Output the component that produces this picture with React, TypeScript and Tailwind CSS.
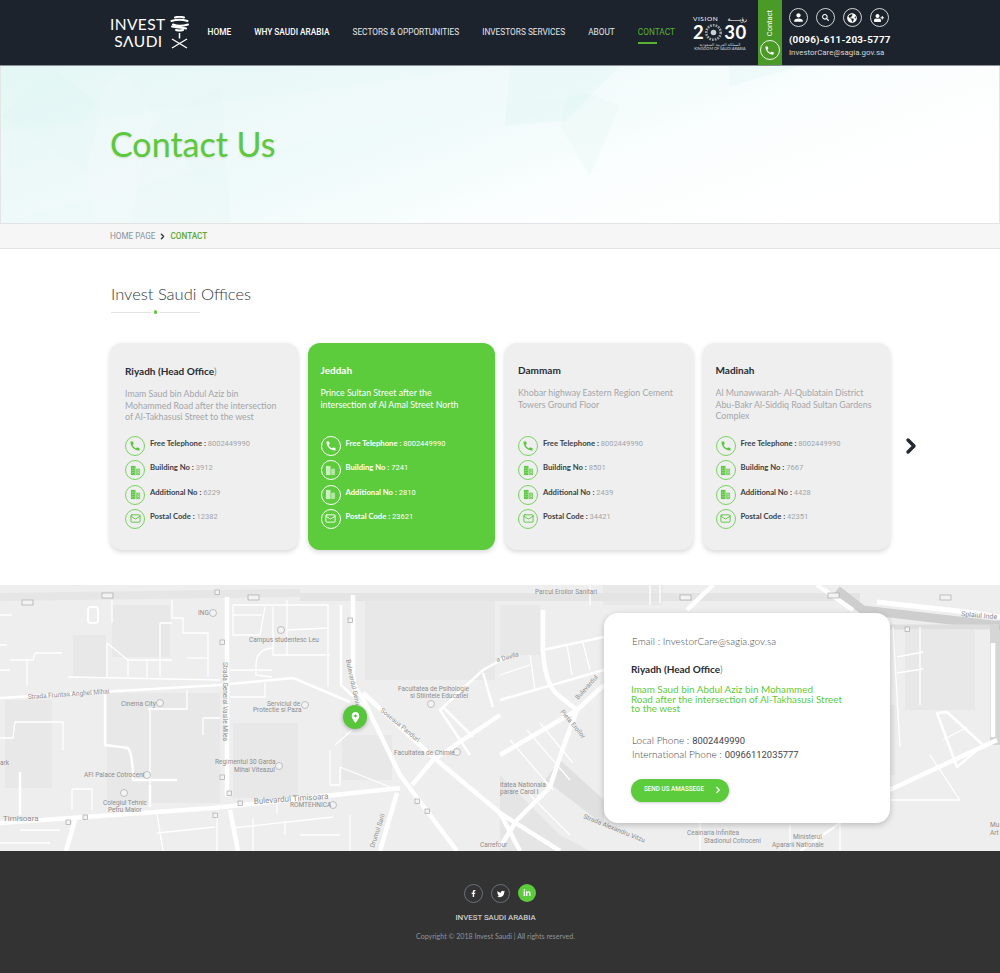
import { ChevronRight, Mail } from "lucide-react";
import { FaFacebookF, FaGlobeAmericas, FaLinkedinIn, FaSearch, FaTwitter, FaUserPlus } from "react-icons/fa";
import { MdCall, MdPerson, MdPlace } from "react-icons/md";

const NAV_ITEMS = ["HOME", "WHY SAUDI ARABIA", "SECTORS & OPPORTUNITIES", "INVESTORS SERVICES", "ABOUT"];

const OFFICES = [
  {
    name: "Riyadh (Head Office",
    close: ")",
    text: "Imam Saud bin Abdul Aziz bin Mohammed Road after the intersection of Al-Takhasusi Street to the west",
    phone: "8002449990",
    building: "3912",
    additional: "6229",
    postal: "12382",
  },
  {
    name: "Jeddah",
    text: "Prince Sultan Street after the intersection of Al Amal Street North",
    phone: "8002449990",
    building: "7241",
    additional: "2810",
    postal: "23621",
    active: true,
  },
  {
    name: "Dammam",
    text: "Khobar highway Eastern Region Cement Towers Ground Floor",
    phone: "8002449990",
    building: "8501",
    additional: "2439",
    postal: "34421",
  },
  {
    name: "Madinah",
    text: "Al Munawwarah- Al-Qublatain District Abu-Bakr Al-Siddiq Road Sultan Gardens Complex",
    phone: "8002449990",
    building: "7667",
    additional: "4428",
    postal: "42351",
  },
];

function BuildingIcon({ className }: { className: string }) {
  return (
    <svg viewBox="0 0 12 12" className={className} fill="currentColor">
      <path d="M1 1h5v10H1z" opacity="0.95" />
      <path d="M6.6 4H11v7H6.6z" opacity="0.7" />
      <path d="M2 3h1v1H2zM4 3h1v1H4zM2 5.5h1v1H2zM4 5.5h1v1H4zM2 8h1v1H2zM4 8h1v1H4zM8 6h2v.8H8zM8 8h2v.8H8z" fill="#eee" opacity="0.6" />
    </svg>
  );
}

function Logo() {
  return (
    <div className="flex items-center gap-[4px] text-white">
      <div className="flex flex-col items-end font-['Lato',sans-serif] text-[15.5px] font-normal leading-[17px] tracking-[0.4px]">
        <span>INVEST</span>
        <span className="mr-[3px]">SΛUDI</span>
      </div>
      <svg viewBox="0 0 19 33" className="h-[33px] w-[19px]" fill="none" stroke="currentColor">
        <path d="M5 1.5c3-1 6-1 9 0M1.5 5c5-1.500 11-1.500 16 0M3 8.500c4 1.500 10 1.500 15 0M2 10.500c5 1 10 1 14 2M6 14c2 .6 5 .6 7 0" strokeWidth="2" strokeLinecap="round" />
        <path d="M9.500 17v5.500" strokeWidth="1.500" />
        <path d="M2 23l15 9M17 23L2 32" strokeWidth="1.300" />
      </svg>
    </div>
  );
}

function VisionLogo() {
  return (
    <div className="flex w-[54px] flex-col text-white">
      <div className="flex items-center justify-between font-['Lato',sans-serif] text-[6.5px] leading-[8px] tracking-[0.6px]">
        <span>VISION</span>
        <span className="font-['DejaVu_Sans',sans-serif] text-[6px] tracking-normal">رؤيـــــة</span>
      </div>
      <div className="mt-[1px] flex items-center justify-between font-['Lato',sans-serif] text-[18.5px] font-bold leading-[16px]">
        <span>2</span>
        <svg viewBox="0 0 16 16" className="h-[17px] w-[17px]">
          <circle cx="8" cy="8" r="6.800" fill="none" stroke="#9aa0a5" strokeWidth="2.400" strokeDasharray="1.600 1" />
          <circle cx="8" cy="8" r="2.600" fill="#ccd0d2" />
        </svg>
        <span className="tracking-[0.6px]">30</span>
      </div>
      <span className="mt-[1px] text-center font-['DejaVu_Sans',sans-serif] text-[4px] leading-[5px] text-gray-300">المملكة العربية السعودية</span>
      <span className="text-center font-['Lato',sans-serif] text-[3.8px] leading-[4px] text-gray-300">KINGDOM OF SAUDI ARABIA</span>
    </div>
  );
}

function Header() {
  const circle = "flex h-[19px] w-[19px] items-center justify-center rounded-full border border-white/80 text-white";
  return (
    <header className="flex h-[66px] items-center border-b border-[#8a9094] bg-[#1c232c] pl-[110px] font-['Roboto',sans-serif]">
      <Logo />
      <nav className="ml-[19px] flex gap-[23px] text-[8.3px] leading-none text-[#e5e7e8]">
        {NAV_ITEMS.map((item, i) => (
          <a key={item} className={i < 2 ? "font-medium text-white" : ""}>
            {item}
          </a>
        ))}
      </nav>
      <div className="relative ml-[23px] text-[8.3px] leading-none text-[#58b332]">
        <a>CONTACT</a>
        <div className="absolute left-0 top-[14px] h-[2px] w-[19px] bg-[#58b332]" />
      </div>
      <div className="ml-[18px]">
        <VisionLogo />
      </div>
      <div className="ml-[11px] flex h-[65px] w-[24px] flex-col items-center justify-between bg-[#4a9a27] pb-[5px] pt-[10px]">
        <span className="rotate-180 text-[7.5px] leading-none text-white [writing-mode:vertical-rl]">Contact</span>
        <span className="flex h-[20px] w-[20px] items-center justify-center rounded-full border border-white/90 text-white">
          <MdCall size={11} />
        </span>
      </div>
      <div className="ml-[7px] flex h-[65px] flex-col pt-[8px]">
        <div className="flex gap-[8px]">
          <span className={circle}><MdPerson size={13} /></span>
          <span className={circle}><FaSearch size={7} /></span>
          <span className={circle}><FaGlobeAmericas size={10} /></span>
          <span className={circle}><FaUserPlus size={10} /></span>
        </div>
        <div className="mt-[6px] text-[9.9px] font-bold leading-[13px] tracking-[0.2px] text-white">(0096)-611-203-5777</div>
        <div className="mt-[1px] text-[7.9px] leading-[11px] text-[#d5d8da]">InvestorCare@sagia.gov.sa</div>
      </div>
    </header>
  );
}

function Hero() {
  return (
    <section className="relative h-[157px] border-x border-[#e5e5e5] bg-[linear-gradient(160deg,#e4f7f5_0%,#effafa_40%,#fbfefe_65%,#ffffff_85%)] pl-[109px]">
      <svg viewBox="0 0 1000 157" className="absolute inset-0 h-full w-full" preserveAspectRatio="none">
        <path d="M50 0L100 40 85 105 0 50Z" fill="#d6f2ef" opacity="0.15" />
        <path d="M120 0L225 157 95 157 80 60Z" fill="#ffffff" opacity="0.12" />
        <path d="M510 0H620L565 55 505 60Z" fill="#d4f3ef" opacity="0.25" />
        <path d="M570 20L620 40 590 110 560 60Z" fill="#d8f3f0" opacity="0.18" />
        <path d="M220 20L230 157 130 157 150 60Z" fill="#dff5f2" opacity="0.2" />
        <path d="M0 65L500 0 800 0 360 60 0 157Z" fill="#ffffff" opacity="0.12" />
        <path d="M730 0L800 0 730 20Z" fill="#d8f3ef" opacity="0.25" />
      </svg>
      <h1 className="relative pt-[57px] font-['Lato',sans-serif] text-[34px] font-normal leading-[42px] text-[#5bc93b] [text-shadow:0_1px_2px_rgba(0,0,0,0.12)]">
        Contact Us
      </h1>
    </section>
  );
}

function Breadcrumb() {
  return (
    <div className="flex h-[26px] items-center gap-[3px] border-y border-[#e3e3e3] bg-[#f6f6f6] pl-[110px] pt-[1px] font-['Roboto',sans-serif] text-[8.2px] leading-none">
      <span className="text-[#8b939b]">HOME PAGE</span>
      <ChevronRight size={9} strokeWidth={3.5} className="text-[#26303a]" />
      <span className="font-medium text-[#5aa834]">CONTACT</span>
    </div>
  );
}

function OfficeRow({ icon, label, value, active }: { icon: React.ReactNode; label: string; value: string; active?: boolean }) {
  return (
    <div className="flex h-[20px] items-start gap-[5px]">
      <span className={`flex h-[20px] w-[20px] shrink-0 items-center justify-center rounded-full border ${active ? "border-white text-white" : "border-[#79d261] text-[#57c63a]"}`}>
        {icon}
      </span>
      <span className={`-mt-[3px] whitespace-nowrap font-['Lato',sans-serif] text-[7.7px] font-bold leading-[20px] ${active ? "text-white" : "text-[#3a3f44]"}`}>
        {label} :{" "}
        <span className={`font-['Roboto',sans-serif] text-[7.5px] font-normal ${active ? "text-white" : "text-[#a1a5aa]"}`}>{value}</span>
      </span>
    </div>
  );
}

function OfficeCard({ office, first }: { office: (typeof OFFICES)[number]; first: boolean }) {
  const active = !!office.active;
  const buildingTint = active ? "h-[11px] w-[11px] text-white/70" : "h-[11px] w-[11px] text-[#57c63a]";
  return (
    <article
      className={`flex h-[207px] flex-col rounded-[12px] shadow-[0_2px_5px_rgba(0,0,0,0.16)] ${first ? "px-[15px] pt-[22px]" : "px-[13px] pt-[21px]"} ${active ? "bg-[#5ccb3c]" : "bg-[#efefef]"}`}
    >
      <h3 className={`font-['Lato',sans-serif] text-[10px] font-bold leading-[13px] ${active ? "text-white" : "text-[#262c33]"}`}>
        {office.name}
        {office.close && <span className="font-light">{office.close}</span>}
      </h3>
      <p className={`mt-[10px] h-[40px] font-['Lato',sans-serif] text-[8.8px] leading-[11.5px] ${active ? "w-[145px] text-white" : "text-[#a2a6ab]"}`}>
        {office.text}
      </p>
      <div className={`flex flex-col gap-[4.3px] ${first ? "mt-[8px]" : "mt-[9px]"}`}>
        <OfficeRow active={active} icon={<MdCall size={12} />} label="Free Telephone" value={office.phone} />
        <OfficeRow active={active} icon={<BuildingIcon className={buildingTint} />} label="Building No" value={office.building} />
        <OfficeRow active={active} icon={<BuildingIcon className={buildingTint} />} label="Additional No" value={office.additional} />
        <OfficeRow active={active} icon={<Mail size={11} />} label="Postal Code" value={office.postal} />
      </div>
    </article>
  );
}

function Offices() {
  return (
    <section className="h-[336px] pl-[110px] pt-[35px]">
      <h2 className="pl-[1px] font-['Lato',sans-serif] text-[16.5px] font-light leading-[20px] text-[#33383f]">Invest Saudi Offices</h2>
      <div className="mt-[6px] flex w-[90px] items-center gap-[3px] pl-[1px]">
        <div className="h-px w-[40px] bg-[#e3e3e3]" />
        <div className="h-[4px] w-[4px] rounded-full bg-[#5ccb3c]" />
        <div className="h-px w-[40px] bg-[#e3e3e3]" />
      </div>
      <div className="mt-[29px] flex items-center">
        <div className="grid w-[780px] grid-cols-4 gap-[10px]">
          {OFFICES.map((office, i) => (
            <OfficeCard key={office.name} office={office} first={i === 0} />
          ))}
        </div>
        <ChevronRight size={24} strokeWidth={3.4} className="ml-[9px] mt-[-2px] text-[#23292f]" />
      </div>
    </section>
  );
}

const ROADS_THIN = [
  "M233 20H328V102", "M233 20V50H260L265 22", "M233 30H262", "M273 22V70H330", "M287 15V70", "M287 45L328 43",
  "M273 63Q256 64 256 80V90L272 92", "M230 85H272", "M265 98V112H230", "M172 15V33H183V48H208V92", "M160 38V92M160 38H172",
  "M187 73H208", "M107 58L128 75V92M107 58V92M128 75H172M147 75V92", "M68 92L220 95", "M10 75H33L35 68H62M27 75V100",
  "M112 15V38", "M148 124H187V105M150 124V215", "M203 133H220M203 133V150", "M15 137H63V165M15 137L13 153H0",
  "M72 204H92V225M72 204V225", "M340 182L390 202M340 182V200H330M330 165V200M335 160L352 145", "M157 228L163 266M217 226V266M277 218V228M253 234V266",
  "M157 248L215 242M333 232L233 243M300 250H340M350 230V266M285 236V250", "M20 245H60M0 258H50",
  "M530 70L535 105M567 60L572 90M583 58L590 85M500 90L530 80", "M540 138L573 178M527 145L570 195M510 155L553 205M530 210L570 250",
  "M893 42L900 162M897 72L923 67M897 88L923 84M920 42V120", "M943 155L967 142", "M930 170L960 215", "M890 215H960", "M650 0V20M660 0V18M590 0V20",
  "M700 230V266M790 240V266M840 225V266", "M0 30H12M0 60H7M0 85H10",
];

const ROADS_MID = [
  "M0 113L220 100L293 93L350 117", "M105 108V160L128 163Q133 170 133 195H177", "M150 200V222", "M20 187V230",
  "M443 122L473 152M483 88L493 122", "M470 170L440 125L483 85L510 70", "M543 65L604 52", "M500 115L604 85",
  "M341 20V100L368 125", "M937 128L957 182L983 160L947 127Z", "M883 208L830 245L800 266",
];

const ROADS_WIDE = [
  "M353 10V92Q354 104 362 112L400 190L457 266", "M363 108L433 172L500 228L560 266", "M412 200L433 175L500 130",
  "M0 238L213 223L400 203", "M227 12V212", "M66 266L75 235", "M380 266L397 208", "M230 225L238 266",
  "M543 25V65Q545 100 558 110L577 125", "M577 125L500 170", "M577 125L604 100", "M577 125Q560 170 550 202L517 235L500 262",
  "M713 0L687 25", "M817 0L853 25", "M993 58V152", "M997 155L883 208", "M500 228L520 266",
];

function MapLabel({ x, y, text, rotate = 0, size = 6.5 }: { x: number; y: number; text: string; rotate?: number; size?: number }) {
  return (
    <text x={x} y={y} fontSize={size} fill="#8d8d8d" fontFamily="Roboto, sans-serif" transform={rotate ? `rotate(${rotate} ${x} ${y})` : undefined}>
      {text}
    </text>
  );
}

function MapDrawing() {
  return (
    <svg viewBox="0 0 1000 266" className="absolute inset-0 h-full w-full">
      <rect width="1000" height="266" fill="#eeeeee" />
      <g fill="#e8e8e8">
        <rect x="73" y="50" width="33" height="42" />
        <rect x="112" y="20" width="58" height="52" />
        <rect x="5" y="115" width="47" height="88" />
        <rect x="107" y="108" width="113" height="110" />
        <rect x="233" y="138" width="65" height="75" />
        <rect x="342" y="150" width="50" height="45" />
        <rect x="365" y="10" width="130" height="85" />
        <rect x="905" y="45" width="70" height="80" />
        <rect x="500" y="20" width="40" height="50" />
        <rect x="603" y="0" width="60" height="20" />
        <rect x="870" y="120" width="25" height="70" />
      </g>
      <path d="M500 190L560 250 590 266H500Z" fill="#e5e5e5" />
      <path d="M560 175L604 215V240L545 195Z" fill="#e0e0e0" />
      <path d="M0 12L300 8" stroke="#e6e6e6" strokeWidth="8" fill="none" />
      <path d="M300 12H860" stroke="#e4e4e4" strokeWidth="8" fill="none" />
      <path d="M837 5L863 25L993 40H1000" stroke="#cecece" strokeWidth="9" fill="none" />
      <path d="M890 42H1000" stroke="#dedede" strokeWidth="5" fill="none" />
      <path d="M995 40V160" stroke="#d6d6d6" strokeWidth="10" fill="none" />
      <g fill="none" stroke="#ffffff" strokeLinejoin="round">
        <g strokeWidth="1.3">{ROADS_THIN.map((d) => <path key={d} d={d} />)}</g>
        <g strokeWidth="2.5">{ROADS_MID.map((d) => <path key={d} d={d} />)}</g>
        <g strokeWidth="4.5">{ROADS_WIDE.map((d) => <path key={d} d={d} />)}</g>
        <path d="M877 17L967 27L1000 32" strokeWidth="5" />
        <rect x="88" y="22" width="10" height="16" rx="3" strokeWidth="2" />
      </g>
      <g fill="#f3f3f3" stroke="#a9a9a9" strokeWidth="0.7">
        {[[22, 15], [102, 8], [248, 10], [828, 8], [680, 10], [940, 10], [1000, 40]].map(([x, y]) => (
          <rect key={`${x}-${y}`} x={x} y={y} width="11" height="5" />
        ))}
        {[[215, 5], [220, 55], [348, 33], [220, 190], [227, 206], [238, 216], [213, 228], [66, 235], [83, 230], [415, 214], [425, 224], [905, 42]].map(([x, y]) => (
          <rect key={`p${x}-${y}`} x={x} y={y} width="4.5" height="4.5" />
        ))}
        {[[281, 45], [160, 118], [305, 120], [279, 181], [147, 190], [124, 208], [333, 220], [431, 119], [457, 167], [213, 28]].map(([x, y]) => (
          <circle key={`c${x}-${y}`} cx={x} cy={y} r="3.5" />
        ))}
      </g>
      <MapLabel x={198} y={30} text="ING" />
      <MapLabel x={249} y={57} text="Campus studentesc Leu" />
      <MapLabel x={28} y={114} text="Strada Fruntas Anghel Mihai" rotate={-4} />
      <MapLabel x={121} y={121} text="Cinema City" />
      <MapLabel x={267} y={121} text="Serviciul de" />
      <MapLabel x={253} y={127} text="Protectie si Paza" />
      <MapLabel x={223} y={77} text="Strada General Vasile Milea" rotate={90} />
      <MapLabel x={346} y={75} text="Bulevardul Geniului" rotate={78} />
      <MapLabel x={380} y={126} text="Soseaua Panduri" rotate={40} />
      <MapLabel x={398} y={106} text="Facultatea de Psihologie" />
      <MapLabel x={410} y={113} text="si Stiintele Educatiei" />
      <MapLabel x={394} y={170} text="Facultatea de Chimie" />
      <MapLabel x={215} y={179} text="Regimentul 30 Garda" />
      <MapLabel x={234} y={187} text="Mihai Viteazul" />
      <MapLabel x={84} y={192} text="AFI Palace Cotroceni" />
      <MapLabel x={103} y={220} text="Colegiul Tehnic" />
      <MapLabel x={108} y={227} text="Petru Maior" />
      <MapLabel x={254} y={219} text="Bulevardul Timisoara" rotate={-4} size={8} />
      <MapLabel x={290} y={222} text="ROMTEHNICA" />
      <MapLabel x={3} y={236} text="Timisoara" size={8} />
      <MapLabel x={0} y={180} text="ark" />
      <MapLabel x={374} y={263} text="Drumul Sarii" rotate={-72} />
      <MapLabel x={535} y={9} text="Parcul Eroilor Sanitari" />
      <MapLabel x={497} y={77} text="a Davila" rotate={-15} />
      <MapLabel x={578} y={115} text="Bulevardul" rotate={-48} />
      <MapLabel x={560} y={127} text="Pieta Eroilor" rotate={50} />
      <MapLabel x={583} y={233} text="Strada Alexandru Vitzu" rotate={22} />
      <MapLabel x={500} y={202} text="itatea Nationala" />
      <MapLabel x={500} y={209} text="parare Carol I" />
      <MapLabel x={687} y={250} text="Ceainaria Infinitea" />
      <MapLabel x={704} y={258} text="Stadionul Cotroceni" />
      <MapLabel x={793} y={254} text="Ministerul" />
      <MapLabel x={772} y={262} text="Apararii Nationale" />
      <MapLabel x={961} y={31} text="Splaiul Inde" rotate={5} size={7} />
      <MapLabel x={990} y={242} text="Mu" />
      <MapLabel x={990} y={250} text="Art" />
      <MapLabel x={480} y={262} text="Carrefour" />
    </svg>
  );
}

function MapSection() {
  return (
    <section className="relative h-[266px] overflow-hidden bg-[#eeeeee]">
      <MapDrawing />
      <div className="absolute left-[343px] top-[120px] flex h-[24px] w-[24px] items-center justify-center rounded-full bg-[#57c63a] text-white shadow-[0_1px_4px_rgba(0,0,0,0.3)]">
        <MdPlace size={13} />
      </div>
      <div className="absolute left-[604px] top-[28px] h-[210px] w-[286px] rounded-[14px] bg-white pl-[27px] pt-[22px] shadow-[0_2px_6px_rgba(0,0,0,0.22)]">
        <p className="pl-px font-['Lato',sans-serif] text-[10px] font-light leading-[13px] text-[#4a4f55]">Email : InvestorCare@sagia.gov.sa</p>
        <h3 className="mt-[15px] font-['Lato',sans-serif] text-[10px] font-bold leading-[13px] text-[#262c33]">
          Riyadh (Head Office<span className="font-light">)</span>
        </h3>
        <p className="mt-[9px] whitespace-nowrap font-['Lato',sans-serif] text-[9.9px] leading-[9.5px] text-[#5ccb3c]">
          Imam Saud bin Abdul Aziz bin Mohammed
          <br />
          Road after the intersection of Al-Takhasusi Street
          <br />
          to the west
        </p>
        <p className="mt-[19px] flex h-[14px] items-baseline gap-[3px] pl-px font-['Lato',sans-serif] text-[10px] font-light leading-[14px] text-[#3f444a]">
          Local Phone : <span className="font-['Roboto',sans-serif] text-[9.4px] font-normal">8002449990</span>
        </p>
        <p className="flex h-[14px] items-baseline gap-[3px] pl-px font-['Lato',sans-serif] text-[10px] font-light leading-[14px] text-[#3f444a]">
          International Phone : <span className="font-['Roboto',sans-serif] text-[9.4px] font-normal">00966112035777</span>
        </p>
        <button className="mt-[18px] flex h-[23px] w-[98px] items-center gap-[9px] rounded-full bg-[#5ccb3c] pl-[13px] font-['Roboto',sans-serif] text-[6.3px] font-medium text-white shadow-[0_1px_3px_rgba(0,0,0,0.2)]">
          SEND US AMASSEGE
          <ChevronRight size={10} strokeWidth={3} />
        </button>
      </div>
    </section>
  );
}

function Footer() {
  const ring = "flex h-[19px] w-[19px] items-center justify-center rounded-full border border-[#69707a] text-white";
  return (
    <footer className="flex h-[122px] flex-col items-center bg-[#333333] pt-[33px] font-['Roboto',sans-serif]">
      <div className="flex gap-[8px]">
        <span className={ring}><FaFacebookF size={7} /></span>
        <span className={ring}><FaTwitter size={8} /></span>
        <span className="flex h-[18px] w-[18px] items-center justify-center rounded-full bg-[#5ccb3c] text-white"><FaLinkedinIn size={8} /></span>
      </div>
      <div className="mt-[9px] pr-[9px] text-[7.9px] leading-[11px] text-[#e6e6e6]">INVEST SAUDI ARABIA</div>
      <div className="mt-[8px] pr-[9px] font-['Lato',sans-serif] text-[7.1px] leading-[11px] text-[#8f949a]">Copyright © 2018 Invest Saudi | All rights reserved.</div>
    </footer>
  );
}

export default function App() {
  return (
    <div className="min-h-[973px] w-[1000px] overflow-hidden bg-white">
      <Header />
      <Hero />
      <Breadcrumb />
      <Offices />
      <MapSection />
      <Footer />
    </div>
  );
}
